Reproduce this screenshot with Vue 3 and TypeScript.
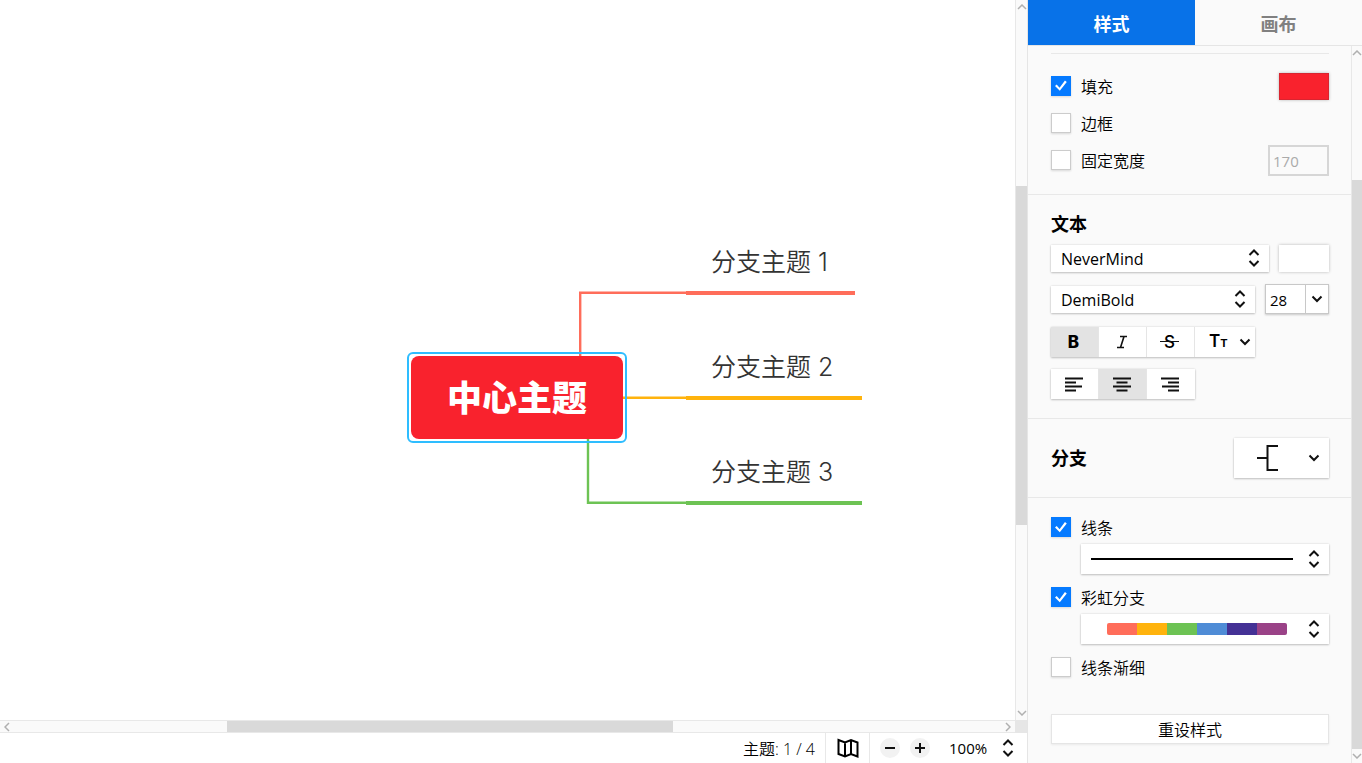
<script setup lang="ts">
import { reactive, ref } from 'vue'

interface Topic {
  id: number
  label: string
  top: number
  width: number
  color: string
}

const topics: Topic[] = [
  { id: 1, label: '分支主题 1', top: 230, width: 169, color: '#ff6d5a' },
  { id: 2, label: '分支主题 2', top: 335, width: 176, color: '#ffb30d' },
  { id: 3, label: '分支主题 3', top: 440, width: 176, color: '#6dc354' },
]

const rainbow = ['#ff6d5a', '#ffb30d', '#6dc354', '#4f8cd6', '#443195', '#9a4287']

const style = reactive({
  fill: true,
  border: false,
  fixedWidth: false,
  width: '170',
  font: 'NeverMind',
  weight: 'DemiBold',
  size: '28',
  line: true,
  rainbow: true,
  tapered: false,
})

const tab = ref<'style' | 'canvas'>('style')
const bold = ref(true)
const italic = ref(false)
const strike = ref(false)
const align = ref<'left' | 'center' | 'right'>('center')
const zoom = ref('100%')

const aligns = [
  { key: 'left', name: '左对齐', d: 'M1 1.5h18M1 5.5h11M1 9.5h17M1 13.5h11' },
  { key: 'center', name: '居中', d: 'M1 1.5h18M4.500 5.5h11M1 9.5h18M4.500 13.5h11' },
  { key: 'right', name: '右对齐', d: 'M1 1.5h18M8 5.5h11M2 9.5h17M8 13.5h11' },
] as const
</script>

<template>
  <div class="app">
    <main class="workspace">
      <div class="canvas">
        <svg class="links" width="1000" height="720" fill="none" aria-hidden="true">
          <path d="M580.200 397V292.800H686" stroke="#ff6d5a" stroke-width="2.400" />
          <path d="M600 397.800H686" stroke="#ffb30d" stroke-width="2.400" />
          <path d="M588 397V502.800H686" stroke="#6dc354" stroke-width="2.400" />
        </svg>
        <div class="root-topic">中心主题</div>
        <div
          v-for="t in topics"
          :key="t.id"
          class="topic"
          :style="{ top: t.top + 'px', width: t.width + 'px', borderColor: t.color }"
        >{{ t.label }}</div>
      </div>
      <div class="vbar">
        <svg class="arrow" viewBox="0 0 10 6"><path d="M1 5l4-4 4 4" /></svg>
        <div class="track"><i class="thumb-v" /></div>
        <svg class="arrow" viewBox="0 0 10 6"><path d="M1 1l4 4 4-4" /></svg>
      </div>
      <div class="hbar">
        <svg class="arrow-h" viewBox="0 0 6 10"><path d="M5 1L1 5l4 4" /></svg>
        <div class="track"><i class="thumb-h" /></div>
        <svg class="arrow-h" viewBox="0 0 6 10"><path d="M1 1l4 4-4 4" /></svg>
      </div>
      <div class="corner" />
      <footer class="status">
        <span class="count">主题: 1 / 4</span>
        <button class="map" type="button" aria-label="导航图">
          <svg width="22" height="20" viewBox="0 0 22 20"><path d="M1.500 2L8 4.500 14 2l6.500 2.500V18.500L14 16l-6 2.500L1.500 16zM8 4.500v14M14 2v14" /></svg>
        </button>
        <button class="round" type="button" aria-label="缩小">
          <svg width="12" height="12" viewBox="0 0 12 12"><path d="M1 6h10" /></svg>
        </button>
        <button class="round" type="button" aria-label="放大">
          <svg width="12" height="12" viewBox="0 0 12 12"><path d="M1 6h10M6 1v10" /></svg>
        </button>
        <span class="zoom">
          <select v-model="zoom" aria-label="缩放"><option>100%</option></select>
          <svg class="updown" viewBox="0 0 12 18"><path d="M1.500 6L6 1.500 10.500 6M1.500 12L6 16.500 10.500 12" /></svg>
        </span>
      </footer>
    </main>

    <aside class="panel">
      <nav class="tabs">
        <button type="button" :class="{ active: tab === 'style' }" @click="tab = 'style'">样式</button>
        <button type="button" :class="{ active: tab === 'canvas' }" @click="tab = 'canvas'">画布</button>
      </nav>
      <div class="body">
        <form class="content" @submit.prevent>
          <section class="group shape">
            <div class="row">
              <label><input v-model="style.fill" type="checkbox" />填充</label>
              <button class="swatch red" type="button" aria-label="填充颜色" />
            </div>
            <div class="row">
              <label><input v-model="style.border" type="checkbox" />边框</label>
            </div>
            <div class="row">
              <label><input v-model="style.fixedWidth" type="checkbox" />固定宽度</label>
              <input v-model="style.width" class="width" type="text" aria-label="宽度" :disabled="!style.fixedWidth" />
            </div>
          </section>

          <section class="group text">
            <h2>文本</h2>
            <div class="line font-line">
              <span class="pick">
                <select v-model="style.font" aria-label="字体"><option>NeverMind</option></select>
                <svg class="updown" viewBox="0 0 12 18"><path d="M1.500 6L6 1.500 10.500 6M1.500 12L6 16.500 10.500 12" /></svg>
              </span>
              <button class="swatch white" type="button" aria-label="文本颜色" />
            </div>
            <div class="line">
              <span class="pick">
                <select v-model="style.weight" aria-label="字重"><option>DemiBold</option></select>
                <svg class="updown" viewBox="0 0 12 18"><path d="M1.500 6L6 1.500 10.500 6M1.500 12L6 16.500 10.500 12" /></svg>
              </span>
              <span class="size">
                <input v-model="style.size" type="text" aria-label="字号" />
                <button type="button" aria-label="选择字号">
                  <svg class="down" viewBox="0 0 12 8"><path d="M1.500 1.500L6 6l4.500-4.500" /></svg>
                </button>
              </span>
            </div>
            <div class="buttons format">
              <button type="button" :class="{ on: bold }" aria-label="粗体" @click="bold = !bold"><b>B</b></button>
              <button type="button" :class="{ on: italic }" aria-label="斜体" @click="italic = !italic">
                <svg class="italic" width="12" height="14" viewBox="0 0 12 14"><path d="M4 1.500h7M1 12.500h7M8 1.500L4.500 12.500" /></svg>
              </button>
              <button type="button" :class="{ on: strike }" aria-label="删除线" @click="strike = !strike"><span class="strike">S</span></button>
              <button type="button" class="case" aria-label="大小写">
                <span class="tt">T<small>T</small></span>
                <svg class="down" viewBox="0 0 12 8"><path d="M1.500 1.500L6 6l4.500-4.500" /></svg>
              </button>
            </div>
            <div class="buttons">
              <button
                v-for="a in aligns"
                :key="a.key"
                type="button"
                :class="{ on: align === a.key }"
                :aria-label="a.name"
                @click="align = a.key"
              >
                <svg width="20" height="15" viewBox="0 0 20 15"><path :d="a.d" /></svg>
              </button>
            </div>
          </section>

          <section class="group branch">
            <h2>分支</h2>
            <button class="popup structure" type="button" aria-label="分支结构" aria-haspopup="listbox">
              <svg width="22" height="26" viewBox="0 0 22 26"><path d="M0 13h10M21 1H10.500v24H21" /></svg>
              <svg class="down" viewBox="0 0 12 8"><path d="M1.500 1.500L6 6l4.500-4.500" /></svg>
            </button>
          </section>

          <section class="group lines">
            <label><input v-model="style.line" type="checkbox" />线条</label>
            <button class="popup" type="button" aria-label="线条样式" aria-haspopup="listbox">
              <span class="stroke" />
              <svg class="updown" viewBox="0 0 12 18"><path d="M1.500 6L6 1.500 10.500 6M1.500 12L6 16.500 10.500 12" /></svg>
            </button>
            <label><input v-model="style.rainbow" type="checkbox" />彩虹分支</label>
            <button class="popup" type="button" aria-label="彩虹配色" aria-haspopup="listbox">
              <span class="rainbow"><i v-for="c in rainbow" :key="c" :style="{ background: c }" /></span>
              <svg class="updown" viewBox="0 0 12 18"><path d="M1.500 6L6 1.500 10.500 6M1.500 12L6 16.500 10.500 12" /></svg>
            </button>
            <label><input v-model="style.tapered" type="checkbox" />线条渐细</label>
            <button class="reset" type="button">重设样式</button>
          </section>
        </form>
        <div class="vbar side">
          <svg class="arrow" viewBox="0 0 10 6"><path d="M1 5l4-4 4 4" /></svg>
          <div class="track"><i class="thumb-s" /></div>
          <svg class="arrow" viewBox="0 0 10 6"><path d="M1 1l4 4 4-4" /></svg>
        </div>
      </div>
    </aside>
  </div>
</template>

<style>
html,
body,
#app {
  height: 100%;
}
body {
  overflow: hidden;
}
</style>

<style scoped>
.app,
.app * {
  box-sizing: border-box;
}
.app {
  display: grid;
  grid-template-columns: minmax(0, 1fr) 335px;
  height: 100%;
  color: #000;
  font: 16px/20px "Open Sans", "Noto Sans CJK SC", sans-serif;
}
button,
input,
select {
  margin: 0;
  padding: 0;
  border: 0;
  border-radius: 0;
  background: none;
  color: inherit;
  font: inherit;
  appearance: none;
}
svg {
  display: block;
  flex: none;
  fill: none;
  stroke: #111;
  stroke-width: 2;
}

/* workspace */
.workspace {
  display: grid;
  grid-template: minmax(0, 1fr) 13px 30px / minmax(0, 1fr) 12px;
  min-width: 0;
  min-height: 0;
}
.canvas {
  position: relative;
  overflow: hidden;
  background: #fff;
}
.links {
  position: absolute;
  top: 0;
  left: 0;
}
.root-topic {
  position: absolute;
  top: 356px;
  left: 411px;
  width: 212px;
  height: 83px;
  border-radius: 8px;
  background: #f9222d;
  color: #fff;
  font-size: 35px;
  font-weight: 900;
  line-height: 83px;
  text-align: center;
}
.root-topic::after {
  content: "";
  position: absolute;
  inset: -4px;
  border: 2px solid #2ebdff;
  border-radius: 6px;
}
.topic {
  position: absolute;
  left: 686px;
  height: 65px;
  padding-left: 25px;
  border-bottom: 4px solid;
  color: #333;
  font: 25px/64px Inter, "Noto Sans CJK SC", sans-serif;
  font-weight: 350;
  white-space: nowrap;
}
.vbar {
  display: flex;
  flex-direction: column;
  align-items: center;
  border-left: 1px solid #e8e8e8;
  background: #fafafa;
}
.hbar {
  display: flex;
  align-items: center;
  border: solid #e8e8e8;
  border-width: 1px 0;
  background: #fafafa;
}
.track {
  flex: 1;
  align-self: stretch;
  min-height: 0;
}
.track i {
  display: block;
  background: #d9d9d9;
}
.hbar .track {
  height: 100%;
}
.thumb-v {
  height: 49%;
  margin-top: 172px;
}
.thumb-h {
  width: 446px;
  height: 100%;
  margin-left: 213px;
}
.arrow {
  width: 10px;
  height: 6px;
  margin: 4px 0;
  stroke: #b0b0b0;
  stroke-width: 1.5;
}
.arrow-h {
  width: 6px;
  height: 10px;
  margin: 0 4px;
  stroke: #b0b0b0;
  stroke-width: 1.5;
}
.corner {
  background: #e6e6e6;
}
.status {
  grid-column: 1 / -1;
  display: flex;
  align-items: stretch;
  justify-content: flex-end;
  background: #fff;
  font-size: 15px;
  line-height: 32px;
}
.count {
  font-size: 16px;
  font-weight: 350;
}
.map {
  display: grid;
  place-items: center;
  width: 45px;
  margin: 0 10px;
  border: solid #e8e8e8;
  border-width: 0 1px;
}
.map svg {
  stroke: #000;
}
.round {
  display: grid;
  place-items: center;
  align-self: center;
  width: 20px;
  height: 20px;
  margin-right: 10px;
  border-radius: 50%;
  background: #f2f2f2;
}
.zoom {
  display: flex;
  align-items: center;
  width: 87px;
  padding: 0 13px 0 9px;
}
.zoom select {
  flex: 1;
  min-width: 0;
}
.updown {
  width: 12px;
  height: 18px;
  pointer-events: none;
}
.down {
  width: 12px;
  height: 8px;
}

/* side panel */
.panel {
  display: flex;
  flex-direction: column;
  min-height: 0;
  border-left: 1px solid #e5e5e5;
  background: #fafafa;
}
.tabs {
  display: flex;
  flex: none;
  height: 46px;
  border-bottom: 1px solid #e5e5e5;
}
.tabs button {
  flex: 1;
  padding-top: 2px;
  color: #808080;
  font-size: 18px;
  font-weight: 700;
}
.tabs .active {
  background: #0872e8;
  color: #fff;
}
.body {
  display: flex;
  flex: 1;
  min-height: 0;
}
.content {
  flex: 1;
  min-width: 0;
}
.side {
  width: 11px;
}
.thumb-s {
  height: 100%;
}
.side .track {
  padding-top: 120px;
}
.group {
  padding: 0 22px 0 23px;
  border-bottom: 1px solid #e8e8e8;
}
.shape::before {
  content: "";
  display: block;
  height: 1px;
  margin: 7px 0 14px;
  background: #e8e8e8;
}
.shape {
  padding-bottom: 15px;
}
.row {
  display: flex;
  align-items: center;
  justify-content: space-between;
  height: 37px;
}
label {
  display: flex;
  align-items: center;
  gap: 10px;
  height: 22px;
  font-weight: 350;
}
input[type="checkbox"] {
  width: 20px;
  height: 20px;
  margin-bottom: 2px;
  border: 1px solid #ccc;
  background: #fff;
  box-shadow: 0 1px 2px #0002;
}
input[type="checkbox"]:checked {
  display: grid;
  place-items: center;
  border-color: #057aff;
  background: #057aff;
}
input[type="checkbox"]:checked::before {
  content: "";
  width: 12px;
  height: 12px;
  background: #fff;
  clip-path: polygon(0 55%, 14% 42%, 38% 68%, 83% 8%, 98% 20%, 40% 94%);
}
.swatch {
  flex: none;
  width: 50px;
  height: 27px;
  box-shadow: 0 0 3px #0004;
}
.red {
  border: 1px solid #d92530;
  background: #f9222d;
}
.white {
  background: #fff;
}
.width {
  width: 61px;
  height: 31px;
  padding-left: 3px;
  border: 2px solid #d6d6d6;
  color: #aaa;
  font-size: 15px;
}
h2 {
  margin: 0;
  font-size: 18px;
  font-weight: 700;
  line-height: 26px;
}
.text {
  padding-top: 16px;
  padding-bottom: 19px;
}
.line {
  display: flex;
  align-items: center;
  gap: 10px;
  height: 30px;
}
.font-line {
  height: 28px;
  margin: 7px 0 12px;
}
.pick {
  display: flex;
  flex: 1;
  position: relative;
  align-items: center;
  justify-content: flex-end;
  height: 27px;
  padding-right: 9px;
  background: #fff;
}
.pick,
.buttons,
.popup,
.reset {
  box-shadow: 0 0 2px #0002, 0 1px 2px #0003;
}
.pick select {
  flex: 1;
  height: 27px;
  padding-top: 1px;
  padding-left: 10px;
}
.size {
  display: flex;
  width: 64px;
  height: 30px;
  border: 1px solid #c8c8c8;
  background: #fff;
  box-shadow: 0 1px 2px #0003;
}
.size input {
  flex: 1;
  min-width: 0;
  padding-top: 1px;
  padding-left: 4px;
  font-size: 15px;
}
.size button {
  display: grid;
  place-items: center;
  width: 23px;
  border-left: 1px solid #c8c8c8;
}
.buttons {
  display: flex;
  width: max-content;
  height: 30px;
  margin-top: 12px;
  background: #fff;
}
.format {
  margin-top: 13px;
}
.buttons button {
  display: flex;
  align-items: center;
  justify-content: center;
  width: 48px;
  padding-right: 2px;
  border-right: 1px solid #e5e5e5;
}
.buttons button:last-child {
  border-right: 0;
}
.buttons .on {
  background: #e3e3e3;
}
.buttons b {
  font: 800 17px/20px Inter, sans-serif;
}
.italic {
  stroke-width: 1.6;
}
.buttons .case {
  justify-content: space-between;
  width: 60px;
  padding: 0 4px 0 14px;
}
.strike {
  position: relative;
  font: 500 17px/20px Inter, sans-serif;
}
.strike::after {
  content: "";
  position: absolute;
  top: 9px;
  left: -4px;
  right: -4px;
  height: 1px;
  background: #111;
}
.tt {
  font: 600 17px/20px Inter, sans-serif;
}
.tt small {
  font-size: 11px;
  font-weight: 700;
}
.branch {
  display: flex;
  align-items: center;
  justify-content: space-between;
  height: 79px;
}
.popup {
  display: flex;
  align-items: center;
  justify-content: space-between;
  height: 30px;
  padding: 0 9px 0 10px;
  background: #fff;
}
.structure {
  width: 95px;
  height: 40px;
  padding-left: 23px;
}
.lines {
  display: flex;
  flex-direction: column;
  padding-top: 19px;
  border: 0;
}
.lines .popup {
  margin: 5px 0 13px 30px;
}
.stroke {
  width: 202px;
  height: 2px;
  background: #000;
}
.rainbow {
  display: flex;
  width: 180px;
  height: 12px;
  margin-left: 16px;
  border-radius: 2px;
  overflow: hidden;
}
.rainbow i {
  flex: 1;
}
.reset {
  height: 30px;
  margin-top: 35px;
  padding-top: 2px;
  border: 1px solid #e5e5e5;
  background: #fff;
  box-shadow: 0 1px 2px #0001;
  font-weight: 350;
}
</style>
